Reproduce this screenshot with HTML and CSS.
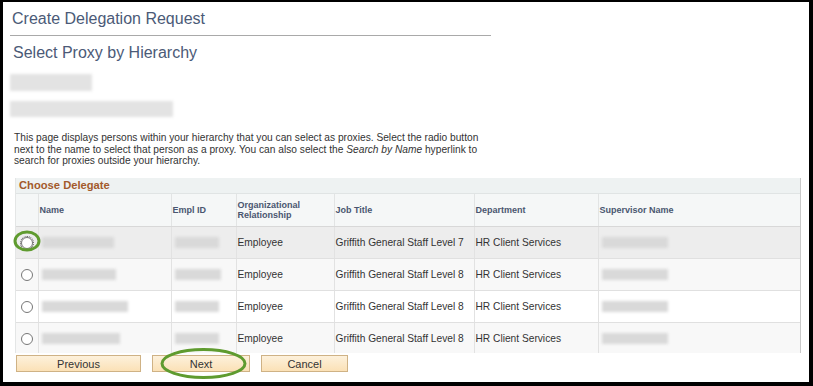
FILE: index.html
```html
<!DOCTYPE html>
<html lang="en">
<head>
    <meta charset="UTF-8">
    <meta name="viewport" content="width=device-width, initial-scale=1.0">
    <title>Create Delegation Request</title>
    <link rel="stylesheet" href="styles.css">
</head>
<body>
    <div class="frame">
        <h1 class="page-title">Create Delegation Request</h1>
        <div class="rule"></div>
        <h2 class="sub-title">Select Proxy by Hierarchy</h2>
        <div class="blur blur-name"></div>
        <div class="blur blur-job"></div>

        <p class="intro">This page displays persons within your hierarchy that you can select as proxies. Select the radio button<br>
        next to the name to select that person as a proxy. You can also select the <i>Search by Name</i> hyperlink to<br>
        search for proxies outside your hierarchy.</p>

        <div class="grid-wrap">
            <div class="grid-caption">Choose Delegate</div>
            <table class="grid">
                <colgroup>
                    <col style="width:22px">
                    <col style="width:133px">
                    <col style="width:65px">
                    <col style="width:98px">
                    <col style="width:140px">
                    <col style="width:124px">
                    <col style="width:204px">
                </colgroup>
                <thead>
                    <tr>
                        <th></th>
                        <th>Name</th>
                        <th>Empl ID</th>
                        <th>Organizational<br>Relationship</th>
                        <th>Job Title</th>
                        <th>Department</th>
                        <th>Supervisor Name</th>
                    </tr>
                </thead>
                <tbody>
                    <tr class="row-active">
                        <td><span class="radio focused"></span></td>
                        <td><div class="cell-blur" style="width:72px"></div></td>
                        <td><div class="cell-blur" style="width:44px"></div></td>
                        <td>Employee</td>
                        <td>Griffith General Staff Level 7</td>
                        <td>HR Client Services</td>
                        <td><div class="cell-blur" style="width:66px"></div></td>
                    </tr>
                    <tr class="row-alt">
                        <td><span class="radio"></span></td>
                        <td><div class="cell-blur" style="width:74px"></div></td>
                        <td><div class="cell-blur" style="width:46px"></div></td>
                        <td>Employee</td>
                        <td>Griffith General Staff Level 8</td>
                        <td>HR Client Services</td>
                        <td><div class="cell-blur" style="width:66px"></div></td>
                    </tr>
                    <tr>
                        <td><span class="radio"></span></td>
                        <td><div class="cell-blur" style="width:86px"></div></td>
                        <td><div class="cell-blur" style="width:44px"></div></td>
                        <td>Employee</td>
                        <td>Griffith General Staff Level 8</td>
                        <td>HR Client Services</td>
                        <td><div class="cell-blur" style="width:66px"></div></td>
                    </tr>
                    <tr class="row-alt">
                        <td><span class="radio"></span></td>
                        <td><div class="cell-blur" style="width:78px"></div></td>
                        <td><div class="cell-blur" style="width:44px"></div></td>
                        <td>Employee</td>
                        <td>Griffith General Staff Level 8</td>
                        <td>HR Client Services</td>
                        <td><div class="cell-blur" style="width:66px"></div></td>
                    </tr>
                </tbody>
            </table>
        </div>

        <div class="buttons">
            <button class="btn btn-prev">Previous</button>
            <button class="btn btn-next">Next</button>
            <button class="btn btn-cancel">Cancel</button>
        </div>

        <!-- green callouts drawn over the screen -->
        <svg class="callouts" width="813" height="386" viewBox="0 0 813 386">
            <ellipse cx="27" cy="241" rx="12" ry="9" fill="none" stroke="#5f9b2f" stroke-width="3"/>
            <ellipse cx="203.5" cy="363.5" rx="41.5" ry="14" fill="none" stroke="#5f9b2f" stroke-width="3"/>
        </svg>
    </div>
</body>
</html>
```

FILE: styles.css
```css
body {
    margin: 0;
    font-family: Arial, "Liberation Sans", sans-serif;
    background: #fff;
}
.frame {
    position: relative;
    width: 813px;
    height: 386px;
    box-sizing: border-box;
    border-style: solid;
    border-color: #000;
    border-width: 2px 4px 4px 3px;
    padding-left: 7px;
    overflow: hidden;
}
.page-title {
    margin: 7px 0 0 2px;
    font-size: 16px;
    line-height: 20px;
    font-weight: normal;
    color: #4b5a77;
}
.rule {
    margin-top: 6px;
    width: 481px;
    height: 1px;
    background: #a9a9a9;
}
.sub-title {
    margin: 7px 0 0 3px;
    font-size: 16px;
    line-height: 20px;
    font-weight: normal;
    color: #4b5a77;
}
.blur {
    background: #e3e3e3;
    filter: blur(1.5px);
}
.blur-name {
    margin-top: 11px;
    width: 82px;
    height: 17px;
}
.blur-job {
    margin-top: 10px;
    width: 163px;
    height: 16px;
}
.intro {
    margin: 15px 0 0 4px;
    height: 35px;
    font-size: 10.2px;
    line-height: 11.5px;
    color: #333;
}
.grid-wrap {
    margin: 11px 0 0 5px;
    width: 786px;
    height: 175px;
    overflow: hidden;
    border-left: 1px solid #e4e6e6;
    border-right: 1px solid #c9c9c9;
    box-sizing: border-box;
}
.grid-caption {
    height: 15px;
    line-height: 15px;
    padding-left: 3px;
    background: #eef2f2;
    color: #a35a2b;
    font-size: 11.2px;
    font-weight: bold;
    border-bottom: 1px solid #e0e4e4;
}
.grid {
    border-collapse: collapse;
    table-layout: fixed;
    width: 785px;
}
.grid th {
    height: 32px;
    padding: 0 1px;
    text-align: left;
    font-size: 9px;
    line-height: 10px;
    font-weight: bold;
    color: #4a5670;
    background: #f5f7f7;
    border-left: 1px solid #e2e4e4;
    border-bottom: 1px solid #d8d8d8;
}
.grid td {
    height: 31px;
    padding: 0 1px;
    font-size: 10.2px;
    color: #333;
    white-space: nowrap;
    border-left: 1px solid #e2e2e2;
    border-bottom: 1px solid #e0e0e0;
}
.grid th:first-child,
.grid td:first-child {
    border-left: none;
    text-align: center;
}
.row-active td {
    background: #ededed;
}
.row-alt td {
    background: #f8f8f8;
}
.radio {
    display: inline-block;
    width: 10px;
    height: 10px;
    border: 1px solid #777;
    border-radius: 50%;
    background: #fff;
    vertical-align: middle;
}
.radio.focused {
    outline: 1px dotted #555;
    outline-offset: 0;
}
.cell-blur {
    height: 11px;
    margin-left: 2px;
    background: #d9d9d9;
    filter: blur(1.5px);
}
.buttons {
    display: flex;
    gap: 11px;
    margin: 2px 0 0 6px;
}
.btn {
    height: 17px;
    padding: 0;
    font-family: Arial, "Liberation Sans", sans-serif;
    font-size: 11px;
    color: #333;
    background: linear-gradient(#fdf1dc, #fbe1b6);
    border: 1px solid #cfb285;
}
.btn-prev {
    width: 125px;
}
.btn-next {
    width: 98px;
}
.btn-cancel {
    width: 87px;
}
.callouts {
    position: absolute;
    left: -3px;
    top: -2px;
    pointer-events: none;
}
```
